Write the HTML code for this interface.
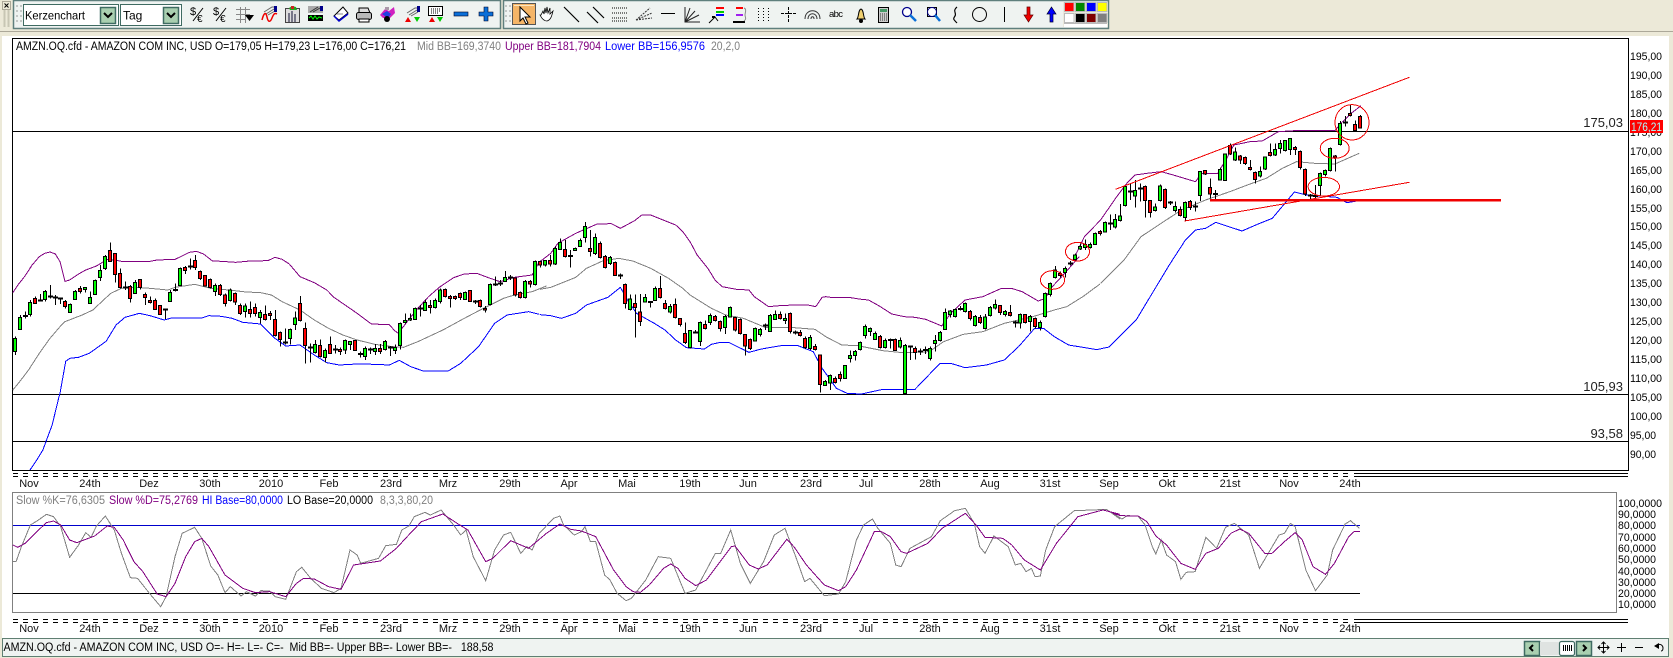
<!DOCTYPE html>
<html><head><meta charset="utf-8"><title>AMZN Chart</title>
<style>
html,body{margin:0;padding:0;background:#ece9d8;width:1673px;height:658px;overflow:hidden}
svg{display:block;font-family:"Liberation Sans",Arial,sans-serif;font-size:11px}
polyline,.n{vector-effect:non-scaling-stroke;fill:none}
polyline,ellipse,.red{shape-rendering:crispEdges}
.ax text{fill:#000}
</style></head><body>
<svg width="1673" height="658" viewBox="0 0 1673 658" xmlns="http://www.w3.org/2000/svg">
<rect width="1673" height="658" fill="#ece9d8"/>
<rect x="0" y="31" width="1673" height="1" fill="#aca899"/>
<rect x="2" y="36" width="1667" height="602" fill="#fff"/>

<!-- left handle -->
<rect x="2.5" y="1.5" width="8" height="8" fill="#ece9d8" stroke="#aca899"/>
<path d="M4.5 3.5l4 4M8.5 3.5l-4 4" stroke="#000" fill="none"/>
<path d="M4.5 10V27M8.5 10V27" stroke="#c8c6b4" stroke-width="2" fill="none"/>

<!-- toolbar -->
<rect x="13.5" y="0.5" width="487" height="28" fill="#eff3f1" stroke="#5f7f7d" stroke-width="1.5"/>
<rect x="503.5" y="0.5" width="605" height="28" fill="#eff3f1" stroke="#5f7f7d" stroke-width="1.5"/>
<path d="M16 5h2v2h-2zM20 5h2v2h-2zM16 10h2v2h-2zM20 10h2v2h-2zM16 15h2v2h-2zM20 15h2v2h-2zM16 20h2v2h-2zM20 20h2v2h-2zM505 5h2v2h-2zM509 5h2v2h-2zM505 10h2v2h-2zM509 10h2v2h-2zM505 15h2v2h-2zM509 15h2v2h-2zM505 20h2v2h-2zM509 20h2v2h-2z" fill="#c4c8c6"/>

<!-- combos -->
<rect x="23.5" y="4.5" width="95" height="21" fill="#fff" stroke="#3f6b62"/>
<text x="25" y="19.5" font-size="12" textLength="60" lengthAdjust="spacingAndGlyphs">Kerzenchart</text>
<rect x="100.5" y="7.5" width="15" height="16" fill="#a9cfb0" stroke="#3f6b62" stroke-width="1.5"/>
<path d="M104 13l4 4 4-4" fill="none" stroke="#000" stroke-width="2"/>
<rect x="120.5" y="4.5" width="61" height="21" fill="#fff" stroke="#3f6b62"/>
<text x="123" y="19.5" font-size="12">Tag</text>
<rect x="163.5" y="7.5" width="15" height="16" fill="#a9cfb0" stroke="#3f6b62" stroke-width="1.5"/>
<path d="M167 13l4 4 4-4" fill="none" stroke="#000" stroke-width="2"/>

<!-- toolbar icons -->
<text x="190" y="15" font-size="11">$</text><text x="197" y="22" font-size="10">€</text><path d="M203 8L193 21" stroke="#000"/>
<text x="213" y="15" font-size="11">$</text><text x="220" y="22" font-size="10">€</text><path d="M226 8L216 21" stroke="#000"/>
<path d="M236 9.500h14M236 14.500h14M236 19.500h10M240.500 7v16M245.500 7v16" stroke="#888" fill="none"/><path d="M245 15h9l-4.500 6z" fill="#000"/>
<path d="M264 12l8-5h3M266 14l8-5M268 15l7-4" stroke="#666" fill="none"/><rect x="274" y="6" width="3" height="6" fill="#00008b"/><path d="M262 20c2-8 4-8 5-3s3 6 5 1 3-5 5-4" stroke="#e00" stroke-width="1.500" fill="none"/>
<rect x="285.500" y="8.500" width="14" height="14" fill="#ddd" stroke="#444"/><path d="M288 13h2v9h-2zM291 11h2v11h-2zM294 14h2v8h-2z" fill="#778"/><path d="M289 8l3-2 4 1 1 3h-7z" fill="#2a2"/><rect x="291" y="6" width="3" height="3" fill="#c22"/>
<rect x="308" y="6" width="15" height="7" fill="#aaa"/><path d="M310 12l8-5M313 12l7-4" stroke="#333"/><rect x="320" y="6" width="3" height="5" fill="#00008b"/><rect x="308" y="15" width="15" height="6" fill="#000"/><path d="M309 18l2-2 2 3 2-3 2 3 2-2 3 1" stroke="#0f0" fill="none"/>
<path d="M334 16l9-9 5 6-9 7z" fill="#fff" stroke="#000"/><path d="M334 16l5 5 9-7" fill="none" stroke="#00c" stroke-width="1.500"/><path d="M337 14l6 0" stroke="#888"/>
<path d="M359 8h9l2 5H359z" fill="#ddd" stroke="#000"/><rect x="356.500" y="12.500" width="15" height="7" rx="2" fill="#bbb" stroke="#000"/><rect x="359" y="19" width="10" height="3" fill="#fff" stroke="#000"/>
<path d="M380 15l5-6 4 2 5-4 1 6-5 5-7 0z" fill="#d020c0"/><path d="M382 14l5-3 4 3-3 4z" fill="#2040e0"/><circle cx="387" cy="19" r="3" fill="#000"/><rect x="385" y="7" width="4" height="3" fill="#a9a"/>
<path d="M407 13l8-5h3M409 15l8-5M411 16l7-4" stroke="#666" fill="none"/><rect x="417" y="6" width="3" height="6" fill="#00008b"/><path d="M405 22l3-5 3 5z" fill="#e00"/><path d="M414 17h6l-3 5z" fill="#0c0"/>
<rect x="428.500" y="6.500" width="14" height="9" fill="#fff" stroke="#000"/><path d="M431 9h10M431 11h10M431 13h8" stroke="#000" stroke-dasharray="1 1"/><path d="M429 22l3-5 3 5z" fill="#e00"/><path d="M437 17h6l-3 5z" fill="#0c0"/>
<rect x="454" y="12" width="14" height="4" fill="#0a6fd8" stroke="#002" stroke-width=".6"/>
<path d="M479 12h5V7h4v5h5v4h-5v5h-4v-5h-5z" fill="#0a6fd8" stroke="#002" stroke-width=".6"/>

<rect x="512.500" y="3.500" width="23" height="21" fill="#f5b567" stroke="#555"/><rect x="514" y="5" width="20" height="1" fill="#fde6c0"/>
<path d="M520 7v14l3-3 3 6 2-1-3-6h5z" fill="#fff" stroke="#000"/>
<path d="M541 15l2-4 1 3 1-6 1 5 1-6 1 6 2-5 0 6 3-3c-1 4-2 9-6 10-3 0-5-2-7-6z" fill="#fff" stroke="#000" stroke-width=".8"/>
<path d="M564 7l15 15M587 12l11 11M593 7l11 11" stroke="#000" fill="none" stroke-width="1.200"/>
<path d="M612 8h15M612 13h15M612 18h15M612 21h15" stroke="#000" stroke-dasharray="1 1" fill="none"/>
<path d="M636 20l14-12M636 20l16-7M636 20l16-2" stroke="#333" stroke-dasharray="2 1" fill="none"/>
<path d="M661 13.500h14" stroke="#000"/>
<path d="M685 7v15h15M685 22l5-14M685 22l10-11M685 22l14-7" stroke="#222" fill="none"/>
<path d="M716 8h8" stroke="#f00" stroke-width="2"/><path d="M716 12h8" stroke="#0c0" stroke-width="2"/><path d="M716 15h8" stroke="#00f" stroke-width="2"/><path d="M709 23l6-6 3 4" stroke="#000" fill="none"/><rect x="712" y="16" width="3" height="2" fill="#000"/>
<path d="M736 8h7" stroke="#f00" stroke-width="2"/><path d="M736 15h7" stroke="#a020f0" stroke-width="2"/><path d="M733 22h12" stroke="#000" stroke-width="2"/><path d="M744 8c3 1 1 5 1 7s2 4-1 6" stroke="#888" fill="none"/>
<path d="M758.500 8v15M763.500 8v15M768.500 8v15" stroke="#000" stroke-dasharray="1 2" fill="none"/>
<path d="M781 13.500h15M788.500 7v16" stroke="#000" stroke-dasharray="3 1" fill="none"/>
<path d="M805 19c0-11 15-11 15 0M808 19c0-7 9-7 9 0M811 19c0-3 3-3 3 0" stroke="#333" fill="none"/>
<text x="829" y="17" font-size="9.500" textLength="14">abc</text>
<path d="M857 19c2-2 1-9 4-10 3 1 2 8 4 10z" fill="#f0d070" stroke="#000"/><circle cx="861" cy="21" r="2" fill="#000"/>
<rect x="878.500" y="7.500" width="10" height="15" fill="#ccc" stroke="#000"/><rect x="880" y="9" width="7" height="3" fill="#496"/><path d="M880 14h7M880 16h7M880 18h7M880 20h7" stroke="#333" stroke-dasharray="1 1"/>
<circle cx="907" cy="12" r="4.500" fill="#fff" stroke="#00008b" stroke-width="1.300"/><path d="M910 15l6 6" stroke="#0a6fd8" stroke-width="2.500"/>
<rect x="927.500" y="7.500" width="9" height="9" fill="#fff" stroke="#000"/><circle cx="932" cy="12" r="4.500" fill="none" stroke="#00008b"/><path d="M935 15l5 6" stroke="#0a6fd8" stroke-width="2.500"/>
<path d="M957 7c-5 4 0 6-2 9s-2 3 2 7" stroke="#000" fill="none" stroke-width="1.200"/>
<circle cx="979.500" cy="14.500" r="7" fill="none" stroke="#000"/>
<path d="M1004.500 7v15" stroke="#000"/>
<path d="M1027 7h3v8h3l-4.500 7-4.500-7h3z" fill="#e00" stroke="#600" stroke-width=".7"/>
<path d="M1050 22h3v-8h3l-4.500-7-4.500 7h3z" fill="#00f" stroke="#003" stroke-width=".7"/>
<rect x="1063" y="2" width="45" height="25" fill="#eae8dc"/>
<g stroke="#bbb"><rect x="1064.500" y="2.500" width="9.500" height="9" fill="#f00"/><rect x="1075.500" y="2.500" width="9.500" height="9" fill="#080"/><rect x="1086.500" y="2.500" width="9.500" height="9" fill="#00f"/><rect x="1097.500" y="2.500" width="9.500" height="9" fill="#ff0"/><rect x="1064.500" y="13.500" width="9.500" height="9" fill="#fff"/><rect x="1075.500" y="13.500" width="9.500" height="9" fill="#000"/><rect x="1086.500" y="13.500" width="9.500" height="9" fill="#800000"/><rect x="1097.500" y="13.500" width="9.500" height="9" fill="#808080"/></g>
<rect x="1064" y="23" width="43" height="1" fill="#bbb"/><rect x="1064" y="24" width="43" height="3" fill="#fff"/>

<!-- chart frame -->
<rect x="12.500" y="38.500" width="1616" height="432" fill="#fff" stroke="#000"/>
<text y="50" x="16" textLength="390" lengthAdjust="spacingAndGlyphs" font-size="11.500">AMZN.OQ.cfd - AMAZON COM INC, USD O=179,05 H=179,23 L=176,00 C=176,21</text>
<text y="50" x="417" textLength="84" lengthAdjust="spacingAndGlyphs" font-size="11.500" fill="#808080">Mid BB=169,3740</text>
<text y="50" x="505" textLength="96" lengthAdjust="spacingAndGlyphs" font-size="11.500" fill="#800080">Upper BB=181,7904</text>
<text y="50" x="605" textLength="100" lengthAdjust="spacingAndGlyphs" font-size="11.500" fill="#0000ff">Lower BB=156,9576</text>
<text y="50" x="711" textLength="29" lengthAdjust="spacingAndGlyphs" font-size="11.500" fill="#808080">20,2,0</text>

<!-- horizontal levels -->
<path d="M12 131.500H1629M12 394.500H1629M12 441.500H1629" stroke="#000"/>
<text x="1623" y="127" text-anchor="end" font-size="13" fill="#222">175,03</text>
<text x="1623" y="391" text-anchor="end" font-size="13" fill="#222">105,93</text>
<text x="1623" y="438" text-anchor="end" font-size="13" fill="#222">93,58</text>

<!-- axis labels -->
<g class="ax" font-size="11">
<text x="1630" y="60" textLength="32" lengthAdjust="spacingAndGlyphs">195,00</text>
<text x="1630" y="79" textLength="32" lengthAdjust="spacingAndGlyphs">190,00</text>
<text x="1630" y="98" textLength="32" lengthAdjust="spacingAndGlyphs">185,00</text>
<text x="1630" y="117" textLength="32" lengthAdjust="spacingAndGlyphs">180,00</text>
<text x="1630" y="136" textLength="32" lengthAdjust="spacingAndGlyphs">175,00</text>
<text x="1630" y="155" textLength="32" lengthAdjust="spacingAndGlyphs">170,00</text>
<text x="1630" y="174" textLength="32" lengthAdjust="spacingAndGlyphs">165,00</text>
<text x="1630" y="193" textLength="32" lengthAdjust="spacingAndGlyphs">160,00</text>
<text x="1630" y="212" textLength="32" lengthAdjust="spacingAndGlyphs">155,00</text>
<text x="1630" y="230" textLength="32" lengthAdjust="spacingAndGlyphs">150,00</text>
<text x="1630" y="249" textLength="32" lengthAdjust="spacingAndGlyphs">145,00</text>
<text x="1630" y="268" textLength="32" lengthAdjust="spacingAndGlyphs">140,00</text>
<text x="1630" y="287" textLength="32" lengthAdjust="spacingAndGlyphs">135,00</text>
<text x="1630" y="306" textLength="32" lengthAdjust="spacingAndGlyphs">130,00</text>
<text x="1630" y="325" textLength="32" lengthAdjust="spacingAndGlyphs">125,00</text>
<text x="1630" y="344" textLength="32" lengthAdjust="spacingAndGlyphs">120,00</text>
<text x="1630" y="363" textLength="32" lengthAdjust="spacingAndGlyphs">115,00</text>
<text x="1630" y="382" textLength="32" lengthAdjust="spacingAndGlyphs">110,00</text>
<text x="1630" y="401" textLength="32" lengthAdjust="spacingAndGlyphs">105,00</text>
<text x="1630" y="420" textLength="32" lengthAdjust="spacingAndGlyphs">100,00</text>
<text x="1630" y="439" textLength="26" lengthAdjust="spacingAndGlyphs">95,00</text>
<text x="1630" y="458" textLength="26" lengthAdjust="spacingAndGlyphs">90,00</text>
</g>
<rect x="1630" y="120" width="33" height="13" fill="#ff0000"/>
<text x="1631" y="131" textLength="31" lengthAdjust="spacingAndGlyphs" font-size="11.500" fill="#a8ffff">176,21</text>

<!-- Bollinger lines -->
<g stroke-width="1" fill="none">
<g transform="translate(0,200) scale(.35714,.33333)">
<polyline stroke="#808080" points="36,570 55,545 80,510 110,460 140,415 168,380 182,365 230,345 260,330 285,305 310,280 340,265 380,262 420,265 470,270 490,262 545,253 590,265 640,270 690,276 730,278 760,285 790,305 840,330 880,360 920,385 960,405 1000,420 1050,433 1100,440 1130,442 1170,425 1240,390 1300,355 1350,327 1410,295 1440,285 1490,275 1530,258"/>
<polyline stroke="#800080" points="36,278 50,255 70,228 90,195 110,170 125,160 140,156 155,162 168,185 182,244 195,240 220,222 240,210 270,198 290,185 300,178 320,180 340,184 380,185 420,184 440,180 490,178 510,168 530,157 550,154 570,162 595,183 620,184 660,187 700,183 750,182 770,172 790,178 810,192 840,230 880,248 915,270 935,292 1000,340 1040,372 1090,374 1105,392 1115,400 1140,365 1170,325 1200,290 1230,262 1270,233 1300,222 1335,220 1370,234 1400,245 1440,232 1490,225 1510,185"/>
<polyline stroke="#0000ff" points="84,810 103,780 120,750 146,675 165,591 168,580 184,484 195,475 220,472 250,460 297,424 325,375 350,352 390,340 420,347 460,360 480,354 565,354 585,347 620,349 650,355 680,367 730,372 770,415 800,438 840,435 880,465 915,488 950,495 1000,492 1050,493 1090,495 1118,481 1150,500 1185,513 1255,513 1290,490 1340,440 1385,370 1420,345 1480,335 1510,343"/>
</g>
<g transform="translate(540,200) scale(.35714,.33333)">
<polyline stroke="#808080" points="0,268 30,262 100,232 130,205 175,183 220,175 260,183 310,205 360,235 400,265 420,285 480,325 520,345 570,355 630,382 700,382 770,388 800,410 845,435 890,437 960,452 1015,458 1090,455 1130,425 1185,403 1240,395 1300,370 1380,350 1440,330 1475,320 1520,290 1568,252"/>
<polyline stroke="#800080" points="0,185 30,160 50,130 100,100 160,72 200,71 225,85 265,62 285,45 310,45 340,58 380,75 400,95 420,125 440,165 470,205 490,240 510,260 550,268 585,270 600,290 640,320 680,316 750,315 772,320 790,292 800,290 820,293 870,293 900,298 920,300 950,318 985,342 1020,350 1050,352 1080,358 1125,378 1150,340 1190,300 1240,290 1290,266 1320,265 1350,275 1395,303 1415,295 1430,265 1465,225 1510,170"/>
<polyline stroke="#0000ff" points="0,344 30,347 60,355 100,340 130,315 190,292 225,262 245,300 270,340 320,370 350,390 380,420 410,443 460,447 480,433 505,427 530,428 585,457 620,447 680,436 720,436 765,455 790,505 830,565 860,580 900,582 960,568 1050,568 1120,490 1150,490 1190,503 1250,495 1300,480 1340,440 1385,385 1410,385 1440,410 1480,435 1560,449"/>
</g>
<g transform="translate(1040,60) scale(.40396,.33333)">
<polyline stroke="#808080" points="150,670 208,600 250,530 300,490 350,450 410,420 470,395 520,372 560,355 600,325 635,305 680,310 730,312 790,280"/>
<polyline stroke="#800080" points="88,585 110,530 150,480 190,410 215,370 235,345 265,340 300,335 330,345 385,365 400,340 440,340 460,300 480,255 520,245 550,243 590,215 630,212 730,212 745,190 770,160 795,137"/>
<polyline stroke="#0000ff" points="140,869 171,861 238,780 320,615 360,540 385,510 410,505 435,487 500,513 540,492 575,475 620,410 630,396 660,405 735,412 760,428 785,423"/>
</g>
</g>

<!-- candles -->
<g transform="translate(0,200) scale(1,.33333)" shape-rendering="crispEdges">
<path class="n" stroke="#000" stroke-width="1" d="M15.5 410V465M20.5 345V390M25.5 335V355M30.5 300V350M35.5 290V312M40.5 282V305M45.5 270V305M50.5 255V295M55.5 285V315M60.5 292V312M65.5 300V325M70.5 310V338M75.5 270V300M80.5 258V280M85.5 262V278M90.5 275V312M95.5 238V285M100.5 195V243M105.5 165V210M110.5 127V185M115.5 160V248M120.5 205V265M125.5 245V270M130.5 255V307M135.5 240V282M140.5 238V268M145.5 278V315M150.5 290V310M155.5 295V330M160.5 315V345M165.5 325V357M170.5 270V305M175.5 250V275M180.5 203V258M185.5 198V222M190.5 175V208M195.5 165V210M200.5 212V240M205.5 225V260M210.5 236V265M215.5 250V288M220.5 252V288M225.5 280V320M230.5 265V305M235.5 278V315M240.5 310V345M245.5 310V352M250.5 305V352M255.5 310V350M260.5 330V370M265.5 317V362M270.5 333V360M275.5 330V410M280.5 395V440M285.5 385V433M290.5 385V433M295.5 335V390M300.5 288V364M305.5 367V490M310.5 430V487M315.5 420V460M320.5 418V473M325.5 445V487M330.5 410V462M335.5 435V460M340.5 443V465M345.5 418V462M350.5 425V450M355.5 420V452M360.5 455V472M365.5 440V480M370.5 443V462M375.5 432V465M380.5 432V462M385.5 420V452M390.5 438V468M395.5 433V462M400.5 368V448M405.5 340V370M410.5 340V363M415.5 322V360M420.5 315V350M425.5 298V333M430.5 300V340M435.5 295V325M440.5 265V310M445.5 265V292M450.5 285V323M455.5 287V300M460.5 278V300M465.5 275V300M470.5 270V306M475.5 300V312M480.5 298V323M485.5 318V338M490.5 250V317M495.5 230V258M500.5 240V258M505.5 213V245M510.5 225V240M515.5 232V290M520.5 275V296M525.5 240V295M530.5 240V262M535.5 182V256M540.5 182V202M545.5 180V200M550.5 165V200M555.5 140V195M560.5 115V150M565.5 120V172M570.5 150V203M575.5 143V153M580.5 115V141M585.5 66V128M590.5 90V170M595.5 100V165M600.5 125V175M605.5 165V205M610.5 168V195M615.5 185V228M620.5 220V237M625.5 250V325M630.5 283V332M635.5 283V412M640.5 282V378M645.5 282V308M650.5 303V323M655.5 260V303M660.5 228V295M665.5 300V328M670.5 312V340M675.5 295V356M680.5 354V380M685.5 368V432M690.5 390V446M695.5 390V400M700.5 365V438M705.5 362V388M710.5 340V375M715.5 345V365M720.5 362V395M725.5 345V402M730.5 320V352M735.5 350V395M740.5 356V403M745.5 402V467M750.5 415V450M755.5 383V425M760.5 384V410M765.5 370V390M770.5 342V396M775.5 332V360M780.5 335V358M785.5 340V372M790.5 338V400M795.5 392V404M800.5 390V410M805.5 410V447M810.5 405V450M815.5 432V452M820.5 463V578M825.5 540V558M830.5 524V570M835.5 530V550M840.5 515V545M845.5 495V537M850.5 452V488M855.5 450V482M860.5 425V452M865.5 373V415M870.5 382V408M875.5 395V420M880.5 405V445M885.5 415V445M890.5 415V445M895.5 415V453M900.5 412V445M905.5 432V583M910.5 438V480M915.5 440V478M920.5 445V465M925.5 440V462M930.5 440V482M935.5 405V455M940.5 393V425M945.5 325V390M950.5 330V352M955.5 325V352M960.5 318V332M965.5 308V337M970.5 330V362M975.5 345V380M980.5 345V372M985.5 342V388M990.5 318V350M995.5 298V328M1000.5 315V345M1005.5 330V350M1010.5 315V350M1015.5 362V382M1020.5 340V385M1025.5 342V370M1030.5 345V395M1035.5 352V385M1040.5 362V392M1045.5 278V352M1050.5 248V290M1055.5 198V235M1060.5 215V232M1065.5 200V232M1070.5 183V197M1075.5 160V185M1080.5 130V150M1085.5 118V150M1090.5 128V145M1095.5 97V135M1100.5 90V106M1105.5 65V98M1110.5 43V90M1115.5 42V85M1120.5 12V65M1125.5 -45V20M1130.5 -50V0M1135.5 -60V23M1140.5 -50V5M1145.5 -43V53M1150.5 0V53M1155.5 10V35M1160.5 -47V5M1165.5 -35V27M1170.5 3V15M1175.5 5V38M1180.5 20V50M1185.5 5V65M1190.5 0V30M1195.5 5V35M1200.5 -87V3M1205.5 -90V-75M1210.5 -65V-5M1215.5 -30V5M1220.5 -98V-58M1225.5 -140V-57M1230.5 -170V-135M1235.5 -158V-117M1240.5 -135V-108M1245.5 -130V-105M1250.5 -120V-88M1255.5 -85V-50M1260.5 -100V-68M1265.5 -130V-90M1270.5 -170V-130M1275.5 -170V-132M1280.5 -180V-140M1285.5 -180V-146M1290.5 -185V-135M1295.5 -162V-135M1300.5 -148V-92M1305.5 -95V-12M1310.5 -18V-3M1315.5 -45V-3M1320.5 -82V-10M1325.5 -92V-70M1330.5 -157V-85M1335.5 -135V-85M1340.5 -237V-164M1345.5 -252V-220M1350.5 -285V-250M1355.5 -238V-206M1360.5 -255V-214"/>
<!-- green bodies -->
<path class="n" style="fill:#00ff00" stroke="#000" d="M13.5 415h3V455h-3zM18.5 352h3V388h-3zM28.5 308h3V343h-3zM43.5 275h3V298h-3zM68.5 314h3V337h-3zM73.5 275h3V298h-3zM83.5 263h3V268h-3zM88.5 292h3V310h-3zM93.5 241h3V283h-3zM98.5 211h3V233h-3zM103.5 170h3V205h-3zM133.5 248h3V280h-3zM168.5 277h3V304h-3zM178.5 205h3V256h-3zM213.5 256h3V274h-3zM228.5 270h3V302h-3zM243.5 318h3V334h-3zM258.5 337h3V353h-3zM288.5 388h3V416h-3zM293.5 354h3V374h-3zM313.5 433h3V458h-3zM323.5 451h3V472h-3zM343.5 421h3V450h-3zM348.5 425h3V433h-3zM363.5 445h3V470h-3zM373.5 445h3V454h-3zM383.5 424h3V449h-3zM393.5 443h3V452h-3zM398.5 371h3V436h-3zM403.5 361h3V367h-3zM408.5 355h3V360h-3zM413.5 325h3V358h-3zM423.5 308h3V331h-3zM433.5 302h3V322h-3zM438.5 270h3V304h-3zM463.5 278h3V298h-3zM488.5 253h3V314h-3zM503.5 233h3V244h-3zM523.5 244h3V292h-3zM533.5 184h3V253h-3zM543.5 182h3V195h-3zM553.5 146h3V192h-3zM558.5 128h3V149h-3zM573.5 146h3V151h-3zM578.5 122h3V139h-3zM583.5 80h3V112h-3zM593.5 112h3V160h-3zM608.5 173h3V190h-3zM628.5 297h3V329h-3zM643.5 293h3V306h-3zM653.5 265h3V301h-3zM668.5 320h3V336h-3zM688.5 392h3V443h-3zM698.5 368h3V424h-3zM708.5 347h3V367h-3zM723.5 350h3V383h-3zM728.5 322h3V351h-3zM753.5 386h3V423h-3zM758.5 388h3V403h-3zM768.5 346h3V394h-3zM773.5 344h3V358h-3zM783.5 356h3V361h-3zM808.5 412h3V446h-3zM823.5 545h3V556h-3zM828.5 526h3V549h-3zM843.5 497h3V535h-3zM848.5 466h3V476h-3zM853.5 454h3V467h-3zM858.5 428h3V449h-3zM863.5 379h3V406h-3zM868.5 386h3V394h-3zM873.5 401h3V418h-3zM883.5 422h3V443h-3zM898.5 422h3V441h-3zM903.5 436h3V581h-3zM928.5 446h3V475h-3zM933.5 421h3V431h-3zM938.5 397h3V422h-3zM943.5 337h3V388h-3zM948.5 333h3V343h-3zM953.5 328h3V350h-3zM963.5 310h3V334h-3zM973.5 349h3V377h-3zM983.5 351h3V385h-3zM988.5 322h3V346h-3zM993.5 313h3V324h-3zM1003.5 335h3V343h-3zM1018.5 344h3V369h-3zM1028.5 350h3V364h-3zM1038.5 368h3V382h-3zM1043.5 281h3V349h-3zM1048.5 250h3V284h-3zM1053.5 210h3V233h-3zM1063.5 205h3V218h-3zM1073.5 165h3V179h-3zM1078.5 140h3V147h-3zM1083.5 133h3V143h-3zM1088.5 133h3V142h-3zM1093.5 100h3V133h-3zM1103.5 68h3V96h-3zM1113.5 58h3V81h-3zM1118.5 48h3V62h-3zM1123.5 -40h3V17h-3zM1133.5 -29h3V-12h-3zM1153.5 21h3V31h-3zM1158.5 -42h3V1h-3zM1173.5 19h3V31h-3zM1183.5 8h3V52h-3zM1198.5 -85h3V-13h-3zM1218.5 -92h3V-60h-3zM1223.5 -138h3V-59h-3zM1233.5 -144h3V-120h-3zM1258.5 -86h3V-72h-3zM1263.5 -129h3V-93h-3zM1273.5 -152h3V-135h-3zM1278.5 -170h3V-155h-3zM1283.5 -178h3V-148h-3zM1288.5 -184h3V-152h-3zM1318.5 -79h3V-43h-3zM1323.5 -89h3V-76h-3zM1328.5 -155h3V-89h-3zM1338.5 -230h3V-166h-3z"/>
<!-- red bodies -->
<path class="n" style="fill:#ff0000" stroke="#000" d="M33.5 296h3V310h-3zM63.5 305h3V320h-3zM78.5 265h3V275h-3zM108.5 152h3V184h-3zM113.5 160h3V223h-3zM118.5 220h3V262h-3zM128.5 260h3V296h-3zM138.5 238h3V262h-3zM143.5 283h3V292h-3zM148.5 302h3V307h-3zM153.5 302h3V328h-3zM158.5 317h3V343h-3zM183.5 202h3V211h-3zM193.5 181h3V203h-3zM198.5 214h3V236h-3zM203.5 226h3V258h-3zM208.5 238h3V262h-3zM218.5 256h3V284h-3zM223.5 285h3V311h-3zM233.5 280h3V306h-3zM238.5 316h3V340h-3zM248.5 329h3V341h-3zM253.5 322h3V341h-3zM263.5 343h3V359h-3zM268.5 340h3V346h-3zM273.5 358h3V406h-3zM278.5 397h3V418h-3zM298.5 310h3V361h-3zM303.5 385h3V437h-3zM318.5 436h3V470h-3zM328.5 433h3V460h-3zM338.5 448h3V455h-3zM353.5 421h3V451h-3zM378.5 445h3V455h-3zM428.5 317h3V322h-3zM443.5 268h3V290h-3zM448.5 290h3V295h-3zM453.5 290h3V295h-3zM458.5 280h3V293h-3zM468.5 271h3V304h-3zM478.5 301h3V319h-3zM483.5 325h3V330h-3zM513.5 234h3V285h-3zM518.5 278h3V292h-3zM528.5 244h3V252h-3zM538.5 185h3V195h-3zM548.5 182h3V192h-3zM563.5 148h3V170h-3zM588.5 146h3V154h-3zM598.5 130h3V172h-3zM603.5 170h3V203h-3zM613.5 188h3V226h-3zM623.5 253h3V311h-3zM633.5 310h3V322h-3zM638.5 336h3V364h-3zM658.5 265h3V292h-3zM663.5 310h3V325h-3zM673.5 313h3V353h-3zM678.5 356h3V374h-3zM683.5 400h3V428h-3zM703.5 374h3V385h-3zM713.5 350h3V361h-3zM718.5 365h3V385h-3zM733.5 352h3V390h-3zM738.5 358h3V400h-3zM743.5 404h3V438h-3zM748.5 418h3V446h-3zM778.5 344h3V355h-3zM788.5 340h3V395h-3zM798.5 398h3V407h-3zM803.5 415h3V443h-3zM813.5 440h3V449h-3zM818.5 465h3V553h-3zM833.5 536h3V547h-3zM838.5 524h3V535h-3zM878.5 409h3V442h-3zM893.5 419h3V451h-3zM913.5 445h3V457h-3zM968.5 334h3V355h-3zM978.5 352h3V367h-3zM998.5 317h3V337h-3zM1008.5 337h3V346h-3zM1023.5 344h3V367h-3zM1033.5 355h3V380h-3zM1058.5 220h3V226h-3zM1098.5 95h3V101h-3zM1143.5 -40h3V2h-3zM1148.5 1h3V38h-3zM1163.5 -32h3V23h-3zM1178.5 28h3V47h-3zM1188.5 4h3V22h-3zM1203.5 -88h3V-78h-3zM1208.5 -38h3V-18h-3zM1228.5 -163h3V-138h-3zM1238.5 -132h3V-120h-3zM1243.5 -127h3V-109h-3zM1248.5 -98h3V-92h-3zM1253.5 -83h3V-62h-3zM1268.5 -142h3V-134h-3zM1293.5 -158h3V-152h-3zM1298.5 -145h3V-97h-3zM1303.5 -92h3V-18h-3zM1333.5 -132h3V-126h-3zM1348.5 -260h3V-254h-3zM1353.5 -227h3V-208h-3zM1358.5 -251h3V-216h-3z"/>
<!-- doji ticks -->
<path class="n" stroke="#000" stroke-width="2" d="M23 348h5M38 301h5M48 290h5M53 293h5M58 296h5M123 263h5M163 328h5M173 270h5M188 200h5M283 428h5M308 443h5M333 448h5M358 462h5M368 449h5M388 443h5M418 325h5M473 305h5M493 253h5M498 250h5M508 232h5M568 168h5M618 226h5M648 306h5M693 398h5M763 377h5M793 398h5M888 420h5M908 440h5M918 455h5M923 450h5M958 327h5M1013 368h5M1068 190h5M1108 70h5M1128 -25h5M1138 -35h5M1168 8h5M1193 20h5M1213 -18h5M1308 -13h5M1313 -12h5M1343 -232h5"/>
</g>

<!-- red annotations -->
<g fill="none" stroke="#f00000">
<path class="red" d="M1115.500 189.300L1409.400 77.300M1184.500 221L1409.400 182.300"/>
<rect x="1210" y="199" width="291" height="2.500" fill="#f00000" stroke="none"/>
<ellipse cx="1052.500" cy="280" rx="12" ry="9.300"/>
<ellipse cx="1077.500" cy="251.700" rx="12" ry="9.300"/>
<ellipse cx="1352" cy="122.300" rx="17" ry="17.700"/>
<ellipse cx="1334.700" cy="148.300" rx="14.500" ry="10"/>
<ellipse cx="1323.800" cy="186.700" rx="15.700" ry="9.300"/>
</g>

<!-- date row 1 -->
<g shape-rendering="crispEdges" fill="none" stroke="#000">
<path d="M13 473.500H1350M13 476.500H1350M13 619.500H1350M13 622.500H1350" stroke-dasharray="5 5"/>
<path d="M1354 473.500H1628M1354 476.500H1628M1354 619.500H1628M1354 622.500H1628"/>
</g>
<g font-size="11" text-anchor="middle" fill="#111">
<text x="29" y="487">Nov</text><text x="90" y="487">24th</text><text x="149" y="487">Dez</text><text x="210" y="487">30th</text><text x="271" y="487">2010</text><text x="329" y="487">Feb</text><text x="391" y="487">23rd</text><text x="448" y="487">Mrz</text><text x="510" y="487">29th</text><text x="569" y="487">Apr</text><text x="627" y="487">Mai</text><text x="690" y="487">19th</text><text x="748" y="487">Jun</text><text x="811" y="487">23rd</text><text x="866" y="487">Jul</text><text x="930" y="487">28th</text><text x="990" y="487">Aug</text><text x="1050" y="487">31st</text><text x="1109" y="487">Sep</text><text x="1167" y="487">Okt</text><text x="1230" y="487">21st</text><text x="1289" y="487">Nov</text><text x="1350" y="487">24th</text>
<text x="29" y="632">Nov</text><text x="90" y="632">24th</text><text x="149" y="632">Dez</text><text x="210" y="632">30th</text><text x="271" y="632">2010</text><text x="329" y="632">Feb</text><text x="391" y="632">23rd</text><text x="448" y="632">Mrz</text><text x="510" y="632">29th</text><text x="569" y="632">Apr</text><text x="627" y="632">Mai</text><text x="690" y="632">19th</text><text x="748" y="632">Jun</text><text x="811" y="632">23rd</text><text x="866" y="632">Jul</text><text x="930" y="632">28th</text><text x="990" y="632">Aug</text><text x="1050" y="632">31st</text><text x="1109" y="632">Sep</text><text x="1167" y="632">Okt</text><text x="1230" y="632">21st</text><text x="1289" y="632">Nov</text><text x="1350" y="632">24th</text>
</g>

<!-- oscillator -->
<rect x="12.500" y="492.500" width="1604" height="120" fill="#fff" stroke="#808080"/>
<text y="504" x="16" textLength="89" lengthAdjust="spacingAndGlyphs" font-size="11.500" fill="#808080">Slow %K=76,6305</text>
<text y="504" x="109" textLength="89" lengthAdjust="spacingAndGlyphs" font-size="11.500" fill="#800080">Slow %D=75,2769</text>
<text y="504" x="202" textLength="81" lengthAdjust="spacingAndGlyphs" font-size="11.500" fill="#0000ff">HI Base=80,0000</text>
<text y="504" x="287" textLength="86" lengthAdjust="spacingAndGlyphs" font-size="11.500">LO Base=20,0000</text>
<text y="504" x="380" textLength="53" lengthAdjust="spacingAndGlyphs" font-size="11.500" fill="#808080">8,3,3,80,20</text>
<path d="M13 525.500H1360" stroke="#0000cc"/><path d="M13 593.500H1360" stroke="#000"/>
<g fill="none">
<g transform="translate(0,450) scale(.35714,.33333)">
<polyline stroke="#808080" points="36,335 45,335 60,290 85,225 105,212 130,193 150,200 170,230 195,322 220,285 240,248 255,262 270,228 295,198 320,240 340,310 365,383 385,385 420,432 450,470 465,440 490,320 510,250 545,232 565,265 590,348 610,375 630,428 645,410 675,438 690,425 715,438 730,422 755,423 770,440 800,448 830,365 845,352 870,385 900,415 935,428 955,415 980,300 1000,315 1010,340 1060,325 1080,287 1110,283 1125,240 1145,228 1160,200 1190,187 1205,195 1235,180 1270,225 1290,255 1305,240 1325,320 1360,392 1385,300 1410,255 1430,247 1458,310 1475,290 1490,300 1510,250 1550,205 1568,198"/>
<polyline stroke="#800080" points="36,285 50,292 70,280 100,248 130,218 150,213 170,225 195,270 215,278 240,268 265,258 300,228 320,232 345,270 375,335 400,365 440,432 465,440 490,400 520,320 545,275 565,265 585,290 630,375 680,415 715,428 755,425 800,440 830,400 850,385 880,387 920,410 955,418 990,345 1065,333 1110,295 1140,260 1180,215 1240,192 1280,220 1310,240 1360,335 1380,325 1430,272 1480,295 1530,250 1568,222"/>
</g>
<g transform="translate(560,450) scale(.35714,.33333)">
<polyline stroke="#808080" points="0,198 10,225 40,255 60,245 70,230 85,275 100,275 125,375 140,390 160,430 185,452 200,445 240,390 275,320 310,325 350,430 380,420 400,380 435,310 450,310 478,240 505,340 533,400 570,335 600,255 630,235 660,320 685,395 700,385 740,437 780,432 800,395 830,270 850,225 875,207 890,235 925,280 940,345 955,350 980,295 1040,260 1065,212 1105,182 1135,175 1160,220 1175,290 1190,310 1215,258 1255,290 1275,345 1290,340 1305,365 1320,355 1330,380 1345,378 1360,300 1385,230 1440,182 1490,180 1530,178 1568,207"/>
<polyline stroke="#800080" points="0,222 30,238 60,243 100,260 150,360 185,410 205,425 225,427 250,405 290,355 310,342 330,355 350,385 380,407 410,390 445,340 480,290 490,288 530,345 555,357 580,345 635,268 655,290 690,345 740,405 780,422 800,410 830,360 880,245 900,245 925,260 955,305 970,310 1030,280 1070,235 1135,190 1165,225 1190,262 1240,265 1265,285 1300,330 1345,360 1390,280 1450,200 1520,180 1568,193"/>
</g>
<g transform="translate(1113,450) scale(.35714,.33333)">
<polyline stroke="#808080" points="0,190 25,207 40,197 70,198 90,225 110,290 120,312 135,270 150,315 175,335 190,388 205,367 230,365 260,262 290,295 315,232 340,220 380,255 410,355 465,255 480,250 497,220 510,230 540,360 567,422 600,375 615,300 650,222 665,212 690,235"/>
<polyline stroke="#800080" points="0,190 20,197 70,198 95,215 120,258 150,285 190,340 230,358 260,310 295,295 330,250 355,237 380,250 425,310 445,310 480,275 510,248 530,270 560,350 595,373 620,340 660,260 675,245 692,245"/>
</g>
</g>
<g font-size="11">
<text x="1618" y="507" textLength="44" lengthAdjust="spacingAndGlyphs">100,0000</text>
<text x="1618" y="518" textLength="38" lengthAdjust="spacingAndGlyphs">90,0000</text>
<text x="1618" y="529" textLength="38" lengthAdjust="spacingAndGlyphs">80,0000</text>
<text x="1618" y="541" textLength="38" lengthAdjust="spacingAndGlyphs">70,0000</text>
<text x="1618" y="552" textLength="38" lengthAdjust="spacingAndGlyphs">60,0000</text>
<text x="1618" y="563" textLength="38" lengthAdjust="spacingAndGlyphs">50,0000</text>
<text x="1618" y="575" textLength="38" lengthAdjust="spacingAndGlyphs">40,0000</text>
<text x="1618" y="586" textLength="38" lengthAdjust="spacingAndGlyphs">30,0000</text>
<text x="1618" y="597" textLength="38" lengthAdjust="spacingAndGlyphs">20,0000</text>
<text x="1618" y="608" textLength="38" lengthAdjust="spacingAndGlyphs">10,0000</text>
</g>

<!-- status bar -->
<rect x="2.500" y="638.500" width="1666" height="18" fill="#eff3f1" stroke="#5f7f72"/>
<text x="3.500" y="651" textLength="490" lengthAdjust="spacingAndGlyphs" font-size="11.500" xml:space="preserve">AMZN.OQ.cfd - AMAZON COM INC, USD O=- H=- L=- C=-  Mid BB=- Upper BB=- Lower BB=-   188,58</text>
<rect x="1524.500" y="641.500" width="15" height="14" fill="#a9cfb0" stroke="#3f6b62" stroke-width="1.500"/>
<path d="M1533 645l-3 3 3 3" fill="none" stroke="#000" stroke-width="2"/>
<rect x="1540" y="642" width="19" height="13" fill="#dfe3e1"/>
<rect x="1559.500" y="641.500" width="15" height="14" rx="2" fill="#fff" stroke="#3f6b62" stroke-width="1.200"/>
<path d="M1563.500 645v6M1565.500 645v6M1567.500 645v6M1569.500 645v6M1571.500 645v6" stroke="#000"/>
<rect x="1576.500" y="641.500" width="15" height="14" fill="#a9cfb0" stroke="#3f6b62" stroke-width="1.500"/>
<path d="M1583 645l3 3-3 3" fill="none" stroke="#000" stroke-width="2"/>
<path d="M1603.500 642v11M1598 647.500h11M1601.500 644l2-2 2 2M1601.500 651l2 2 2-2M1600 645.500l-2 2 2 2M1607 645.500l2 2-2 2" stroke="#000" fill="none"/>
<path d="M1621.500 643v9M1617 647.500h9" stroke="#000" fill="none"/>
<path d="M1635 647.500h8" stroke="#000" fill="none"/>
<path d="M1654 646l5-3 0 6z" fill="#000"/><path d="M1657 645c4-2 6 1 6 3s-1 3-2 3" stroke="#000" fill="none"/>
</svg>
</body></html>
